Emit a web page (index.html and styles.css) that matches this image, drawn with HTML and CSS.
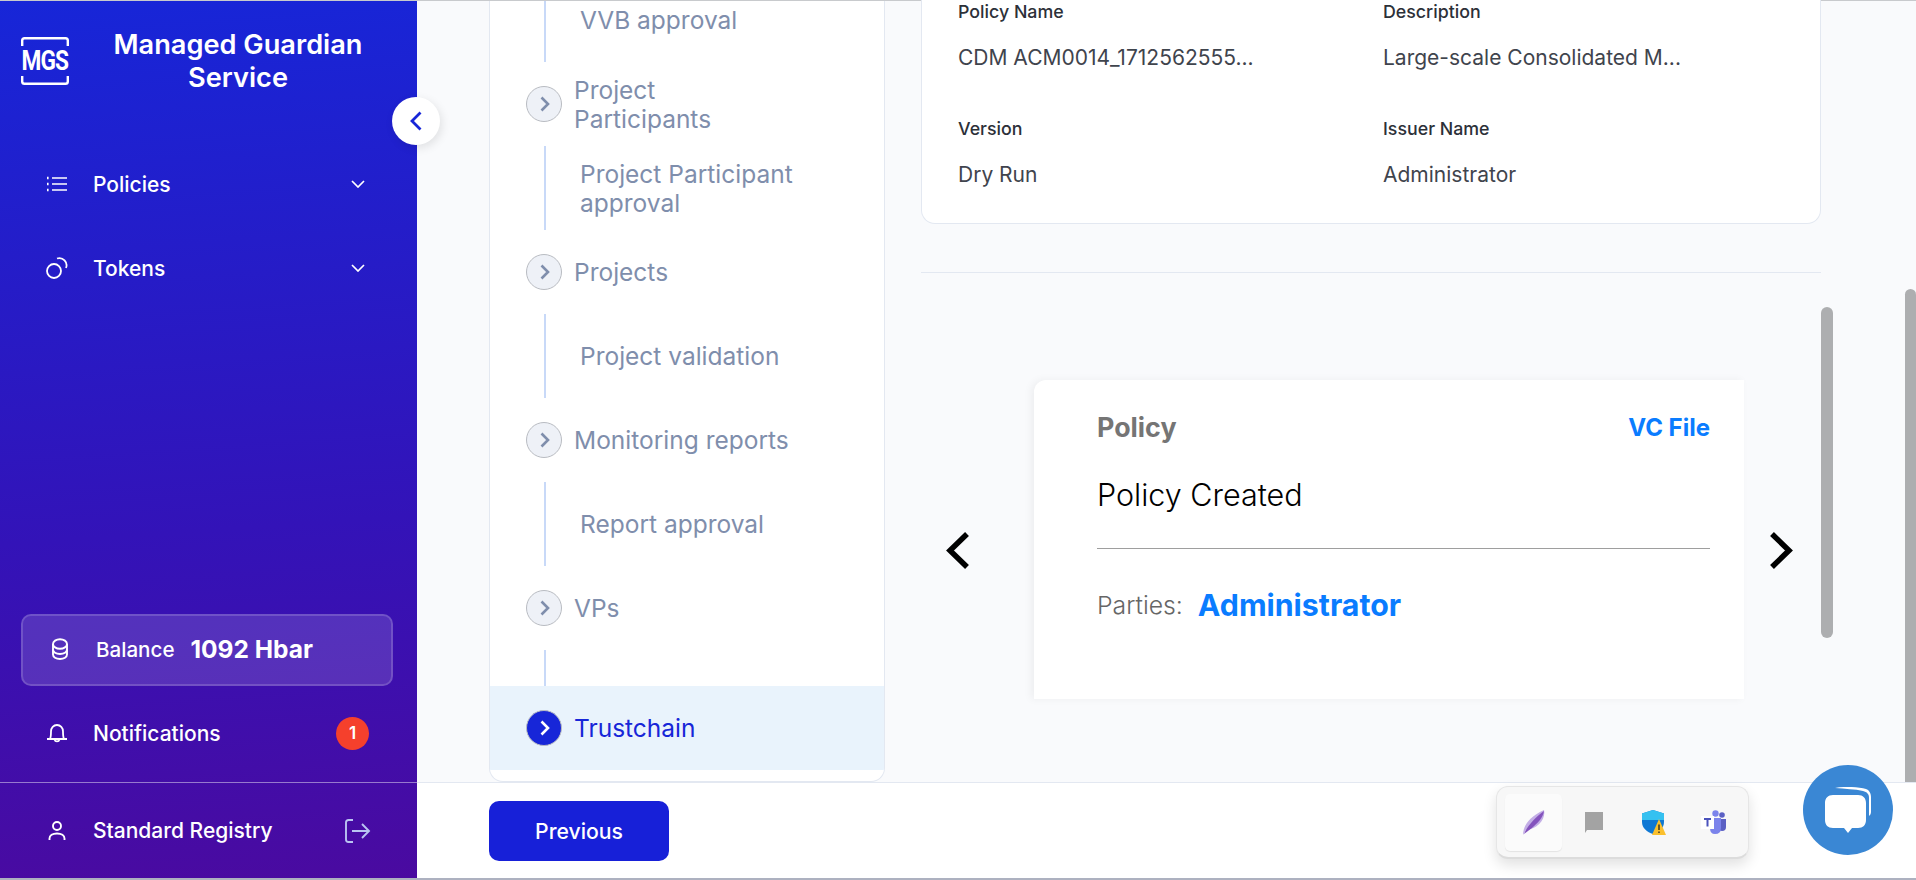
FILE: index.html
```html
<!DOCTYPE html>
<html>
<head lang="en">
    <meta charset="UTF-8">
    <title>Managed Guardian Service</title>
    <link rel="stylesheet" href="styles.css">
</head>
<body>
<div class="app">
    <aside class="sidebar">
        <div class="brand">
            <div class="logo">
                <svg class="logo-frame" width="48" height="48" viewBox="0 0 48 48" fill="none" stroke="#fff" stroke-width="2.4">
                    <path d="M1.2 9V3.5Q1.2 1.2 3.5 1.2H44.500Q46.8 1.2 46.8 3.5V9"/>
                    <path d="M1.2 39V44.500Q1.2 46.8 3.5 46.8H44.500Q46.8 46.8 46.8 44.500V39"/>
                </svg>
                <span class="logo-text">MGS</span>
            </div>
            <div class="brand-name">Managed Guardian Service</div>
        </div>
        <nav class="nav">
            <div class="nav-item">
                <svg class="nav-icon" width="22" height="22" viewBox="0 0 22 22" fill="none" stroke="#fff" stroke-width="1.7">
                    <path d="M6 5H21M6 11H21M6 17H21"/>
                    <path d="M1 5H2.6M1 11H2.6M1 17H2.6" stroke-width="2.4"/>
                </svg>
                <span class="nav-label">Policies</span>
                <svg class="nav-caret" width="14" height="8" viewBox="0 0 14 8" fill="none" stroke="#fff" stroke-width="1.7"><path d="M1 1L7 7L13 1"/></svg>
            </div>
            <div class="nav-item">
                <svg class="nav-icon" width="22" height="22" viewBox="0 0 22 22" fill="none" stroke="#fff" stroke-width="1.8">
                    <circle cx="8" cy="14" r="7"/>
                    <path d="M11 1.500A7.200 7.200 0 0 1 20 11"/>
                </svg>
                <span class="nav-label">Tokens</span>
                <svg class="nav-caret" width="14" height="8" viewBox="0 0 14 8" fill="none" stroke="#fff" stroke-width="1.7"><path d="M1 1L7 7L13 1"/></svg>
            </div>
        </nav>
        <div class="balance">
            <svg class="balance-icon" width="18" height="22" viewBox="0 0 18 22" fill="none" stroke="#fff" stroke-width="1.9">
                <ellipse cx="9" cy="6" rx="7" ry="4.800"/>
                <path d="M2 6V16.500C2 19 5 21 9 21S16 19 16 16.500V6"/>
                <path d="M2 11.500C2 14 5 16 9 16S16 14 16 11.500"/>
            </svg>
            <span class="balance-label">Balance</span>
            <span class="balance-value">1092 Hbar</span>
        </div>
        <div class="nav-item notify">
            <svg class="nav-icon" width="22" height="22" viewBox="0 0 22 22" fill="none" stroke="#fff" stroke-width="1.8">
                <path d="M1 17H21M4 17C5 15 5 12 5 9.500C5 6 7.500 3 11 3S17 6 17 9.500C17 12 17 15 18 17"/>
                <path d="M8.500 17.500A2.600 2.600 0 0 0 13.500 17.500"/>
            </svg>
            <span class="nav-label">Notifications</span>
            <span class="badge">1</span>
        </div>
        <div class="nav-item user">
            <svg class="nav-icon" width="22" height="22" viewBox="0 0 22 22" fill="none" stroke="#fff" stroke-width="1.9">
                <circle cx="11" cy="6" r="4"/>
                <path d="M3.500 20V18.500C3.500 15.500 6.500 13.500 11 13.500S18.500 15.500 18.500 18.500V20"/>
            </svg>
            <span class="nav-label">Standard Registry</span>
            <svg class="logout" width="26" height="24" viewBox="0 0 26 24" fill="none" stroke="#b9c4f2" stroke-width="1.9">
                <path d="M8 1H3.500Q1 1 1 3.500V20.500Q1 23 3.500 23H8"/>
                <path d="M7 12H24M17 5L24 12L17 19"/>
            </svg>
        </div>
    </aside>

    <main class="main">
        <div class="content">
            <div class="steps">
                <div class="steps-list">
                    <div class="sub-step">VVB approval</div>
                    <div class="step">
                        <span class="step-dot"><svg width="10" height="16" viewBox="0 0 10 16" fill="none" stroke="currentColor" stroke-width="2.600"><path d="M1.500 1.500L8 8L1.500 14.500"/></svg></span>
                        <span class="step-name">Project<br>Participants</span>
                    </div>
                    <div class="sub-step">Project Participant<br>approval</div>
                    <div class="step">
                        <span class="step-dot"><svg width="10" height="16" viewBox="0 0 10 16" fill="none" stroke="currentColor" stroke-width="2.600"><path d="M1.500 1.500L8 8L1.500 14.500"/></svg></span>
                        <span class="step-name">Projects</span>
                    </div>
                    <div class="sub-step">Project validation</div>
                    <div class="step">
                        <span class="step-dot"><svg width="10" height="16" viewBox="0 0 10 16" fill="none" stroke="currentColor" stroke-width="2.600"><path d="M1.500 1.500L8 8L1.500 14.500"/></svg></span>
                        <span class="step-name">Monitoring reports</span>
                    </div>
                    <div class="sub-step">Report approval</div>
                    <div class="step">
                        <span class="step-dot"><svg width="10" height="16" viewBox="0 0 10 16" fill="none" stroke="currentColor" stroke-width="2.600"><path d="M1.500 1.500L8 8L1.500 14.500"/></svg></span>
                        <span class="step-name">VPs</span>
                    </div>
                    <div class="sub-step short"></div>
                    <div class="step active">
                        <span class="step-dot"><svg width="10" height="16" viewBox="0 0 10 16" fill="none" stroke="currentColor" stroke-width="2.600"><path d="M1.500 1.500L8 8L1.500 14.500"/></svg></span>
                        <span class="step-name">Trustchain</span>
                    </div>
                </div>
            </div>

            <div class="details">
                <div class="info-card">
                    <div class="info-field">
                        <div class="info-label">Policy Name</div>
                        <div class="info-value">CDM ACM0014_1712562555...</div>
                    </div>
                    <div class="info-field">
                        <div class="info-label">Description</div>
                        <div class="info-value">Large-scale Consolidated M...</div>
                    </div>
                    <div class="info-field">
                        <div class="info-label">Version</div>
                        <div class="info-value">Dry Run</div>
                    </div>
                    <div class="info-field">
                        <div class="info-label">Issuer Name</div>
                        <div class="info-value">Administrator</div>
                    </div>
                </div>
                <div class="rule"></div>
                <div class="carousel">
                    <svg class="arrow" width="23" height="37" viewBox="0 0 23 37" fill="none" stroke="#000" stroke-width="5.500"><path d="M21 2L4 18.500L21 35"/></svg>
                    <div class="vc-card">
                        <div class="vc-top">
                            <span class="vc-type">Policy</span>
                            <span class="vc-link">VC File</span>
                        </div>
                        <div class="vc-title">Policy Created</div>
                        <div class="vc-line"></div>
                        <div class="vc-parties">
                            <span class="vc-parties-label">Parties:</span>
                            <span class="vc-parties-name">Administrator</span>
                        </div>
                    </div>
                    <svg class="arrow" width="23" height="37" viewBox="0 0 23 37" fill="none" stroke="#000" stroke-width="5.500"><path d="M2 2L19 18.500L2 35"/></svg>
                </div>
            </div>
            <div class="inner-track"><div class="inner-thumb"></div></div>
            <div class="page-track"><div class="page-thumb"></div></div>
        </div>
        <div class="footer">
            <button class="btn-prev">Previous</button>
        </div>
    </main>

    <!-- things that float over the page -->
    <button class="collapse">
        <svg width="12" height="20" viewBox="0 0 12 20" fill="none" stroke="#1726d8" stroke-width="2.800"><path d="M10.500 1.500L2 10L10.500 18.500"/></svg>
    </button>

    <div class="tray">
        <div class="tray-item current">
            <svg width="22" height="25" viewBox="0 0 22 25">
                <path d="M0 25C0 16 6 7 21 0C23 9 15 19 3 20Z" fill="#c3aee6"/>
                <path d="M1 24C4 17 10 9 21 1C20 9 12 16 1 24Z" fill="#8453bd"/>
            </svg>
        </div>
        <div class="tray-item">
            <svg width="18" height="21" viewBox="0 0 18 21"><path d="M0 0H18V18H2L0 21Z" fill="#a3a3a3"/></svg>
        </div>
        <div class="tray-item">
            <svg width="24" height="25" viewBox="0 0 24 25">
                <path d="M11 0L22 3.500V12C22 18 17 22 11 24C5 22 0 18 0 12V3.500Z" fill="#0f78d4"/>
                <path d="M11 0L22 3.500V10H0V3.500Z" fill="#35c1f0"/>
                <path d="M17 9L24 25H10Z" fill="#fbc02d"/>
                <path d="M17 14.500V20M17 21.500V23" stroke="#222" stroke-width="1.300"/>
            </svg>
        </div>
        <div class="tray-item">
            <svg width="25" height="24" viewBox="0 0 25 24">
                <circle cx="21" cy="5" r="2.800" fill="#5b60c4"/>
                <circle cx="14.500" cy="3.500" r="3.200" fill="#7b83eb"/>
                <path d="M18 9H25V17Q25 21 21 21Q18 21 17 19Z" fill="#5b60c4"/>
                <path d="M9 8H20V18Q20 24 14 24Q9 24 9 18Z" fill="#7b83eb"/>
                <rect x="0" y="6" width="13" height="13" fill="#fff"/>
                <path d="M3 9H10M6.500 9V16.500" stroke="#4b53bc" stroke-width="2"/>
            </svg>
        </div>
    </div>

    <div class="chat">
        <svg width="46" height="46" viewBox="0 0 46 46">
            <path d="M10 1C20 -1 34 0 41 2C44 3 46 6 46 10V25C46 27 45 28 44 29V11C44 7 42 5 38 4C30 2 20 2 10 1Z" fill="#fff"/>
            <path d="M8 8H33C38 8 41 11 41 16V33C41 38 38 41 33 41H27L23 46L19 41H8C3 41 0 38 0 33V16C0 11 3 8 8 8Z" fill="#fff"/>
        </svg>
    </div>
</div>
</body>
</html>
```

FILE: styles.css
```css
*{
    margin: 0;
    padding: 0;
    box-sizing: border-box;
}
body{
    font-family: "Inter", "Liberation Sans", sans-serif;
    overflow: hidden;
}
.app{
    position: relative;
    display: flex;
    height: 880px;
    border-top: 1px solid #c8cacd;
    border-bottom: 2px solid #adb1c0;
}

/* sidebar */
.sidebar{
    width: 417px;
    flex: none;
    display: flex;
    flex-direction: column;
    background: linear-gradient(176deg, #1726d8 0%, #3313b8 60%, #4a0aa0 100%);
    color: #fff;
}
.brand{
    display: flex;
    align-items: center;
    height: 108px;
    padding: 12px 10px 0 21px;
}
.logo{
    flex: none;
    display: grid;
    grid-template-columns: 48px;
    grid-template-rows: 48px;
    width: 48px;
    height: 48px;
    place-items: center;
}
.logo-frame,
.logo-text{
    grid-area: 1 / 1;
}
.logo-text{
    font-family: "Roboto", sans-serif;
    font-size: 27px;
    font-weight: 700;
    line-height: 28px;
    letter-spacing: -1px;
    transform: scaleX(0.84);
}
.brand-name{
    flex: 1;
    font-size: 27.2px;
    font-weight: 600;
    line-height: 33px;
    text-align: center;
}
.nav{
    margin-top: 54px;
    display: flex;
    flex-direction: column;
    gap: 42px;
}
.nav-item{
    display: flex;
    align-items: center;
    height: 42px;
    padding-left: 46px;
}
.nav-icon{
    flex: none;
    margin-right: 25px;
}
.nav-label{
    flex: 1;
    font-size: 21px;
    font-weight: 500;
}
.nav-caret{
    margin-right: 52px;
}
.balance{
    display: flex;
    align-items: center;
    margin: auto 24px 0 21px;
    height: 72px;
    padding: 0 0 2px 28px;
    background: rgba(255,255,255,0.14);
    border: 2px solid rgba(255,255,255,0.16);
    border-radius: 10px;
}
.balance-icon{
    margin-right: 27px;
}
.balance-label{
    font-size: 20.6px;
    font-weight: 500;
    margin-right: 16px;
}
.balance-value{
    font-size: 24.5px;
    font-weight: 700;
}
.notify{
    margin-top: 26px;
    height: 42px;
    margin-bottom: 28px;
}
.badge{
    width: 33px;
    height: 33px;
    margin-right: 48px;
    border-radius: 50%;
    background: #f5402c;
    text-align: center;
    font-size: 17px;
    font-weight: 600;
    line-height: 33px;
}
.user{
    height: 96px;
    border-top: 1px solid rgba(255,255,255,0.45);
}
.logout{
    margin-right: 46px;
}

/* main area */
.main{
    flex: 1;
    min-width: 0;
    display: flex;
    flex-direction: column;
}
.content{
    flex: 1;
    min-height: 0;
    display: flex;
    padding-left: 72px;
    background: #f9fafc;
}
.steps{
    width: 396px;
    flex: none;
    background: #fff;
    border: 1px solid #e3e8f1;
    border-top: none;
    border-radius: 0 0 14px 14px;
    overflow: hidden;
}
.steps-list{
    margin-top: -23px;
    font-size: 24.5px;
    line-height: 29px;
    color: #7f8eac;
}
.sub-step{
    display: flex;
    align-items: center;
    height: 84px;
    margin-left: 54px;
    padding: 1px 0 0 34px;
    border-left: 2px solid #c8d9f8;
}
.sub-step.short{
    height: 36px;
}
.step{
    display: flex;
    align-items: center;
    height: 84px;
    padding-left: 36px;
}
.step-name{
    padding-top: 1px;
}
.step-dot{
    width: 36px;
    height: 36px;
    flex: none;
    display: flex;
    align-items: center;
    justify-content: center;
    margin-right: 12px;
    padding-left: 2px;
    border: 1px solid #b9bcc2;
    border-radius: 50%;
    background: #eef1f7;
}
.step.active{
    background: #e9f3fc;
    color: #1726d8;
}
.step.active .step-dot{
    background: #1726d8;
    color: #fff;
}
.details{
    width: 900px;
    flex: none;
    margin-left: 36px;
}
.info-card{
    display: grid;
    grid-template-columns: 425px 1fr;
    row-gap: 47px;
    margin-top: -1px;
    padding: 0 36px 36px;
    background: #fff;
    border: 1px solid #e3e8f1;
    border-top: none;
    border-radius: 0 0 14px 14px;
}
.info-label{
    font-size: 17.8px;
    font-weight: 500;
    line-height: 24px;
    color: #2c3038;
}
.info-value{
    margin-top: 22px;
    font-size: 21px;
    line-height: 24px;
    color: #3f444d;
}
.rule{
    height: 1px;
    margin-top: 48px;
    background: #e3e8f1;
}
.carousel{
    display: flex;
    align-items: center;
    height: 319px;
    margin-top: 107px;
    padding-left: 25px;
}
.arrow{
    flex: none;
    margin-top: 21px;
}
.vc-card{
    width: 710px;
    height: 319px;
    margin: 0 26px 0 65px;
    padding: 28px 34px 0 63px;
    background: #fff;
    border-radius: 12px 0 0 0;
    box-shadow: -3px 0 8px rgba(0,0,0,0.05);
}
.vc-top{
    display: flex;
    justify-content: space-between;
    align-items: center;
    height: 38px;
}
.vc-type{
    font-size: 26.8px;
    font-weight: 700;
    color: #757575;
}
.vc-link{
    font-size: 24px;
    font-weight: 700;
    color: #0a7cff;
}
.vc-title{
    margin-top: 30px;
    font-size: 30.5px;
    font-weight: 300;
    line-height: 38px;
    color: #000;
}
.vc-line{
    height: 1px;
    margin-top: 34px;
    background: #9e9e9e;
}
.vc-parties{
    display: flex;
    align-items: center;
    gap: 15px;
    margin-top: 38px;
}
.vc-parties-label{
    font-size: 24.8px;
    font-weight: 300;
    color: #666;
}
.vc-parties-name{
    font-size: 30.3px;
    font-weight: 700;
    color: #0a7cff;
}
.inner-track{
    width: 12px;
    flex: none;
    padding-top: 306px;
}
.inner-thumb{
    height: 331px;
    border-radius: 6px;
    background: #adaeb0;
}
.page-track{
    margin-left: auto;
    width: 11px;
    flex: none;
    padding-top: 288px;
}
.page-thumb{
    height: 100%;
    border-radius: 6px 6px 0 0;
    background: #adaeb0;
}
.footer{
    height: 96px;
    flex: none;
    padding: 18px 0 0 72px;
    background: #fff;
    border-top: 1px solid #e3e8f1;
}
.btn-prev{
    width: 180px;
    height: 60px;
    border: none;
    border-radius: 10px;
    background: #1720d8;
    color: #fff;
    font-family: inherit;
    font-size: 21.2px;
    font-weight: 500;
}

/* floating */
.collapse{
    position: absolute;
    left: 392px;
    top: 96px;
    width: 48px;
    height: 48px;
    display: flex;
    align-items: center;
    justify-content: center;
    border: none;
    border-radius: 50%;
    background: #fff;
    box-shadow: 2px 3px 10px rgba(0,0,0,0.1);
}
.tray{
    position: absolute;
    left: 1496px;
    top: 785px;
    width: 253px;
    height: 73px;
    display: flex;
    align-items: center;
    padding-left: 8px;
    background: #f7f7f7;
    border: 1px solid #e6e6e6;
    border-bottom: 2px solid #dcdcdc;
    border-radius: 12px;
    box-shadow: 0 6px 14px rgba(0,0,0,0.12);
}
.tray-item{
    width: 57px;
    height: 57px;
    flex: none;
    margin-right: 3px;
    display: flex;
    align-items: center;
    justify-content: center;
    border-radius: 5px;
}
.tray-item.current{
    background: #fbfbfb;
    box-shadow: 0 1px 1px rgba(0,0,0,0.08);
}
.chat{
    position: absolute;
    left: 1803px;
    top: 764px;
    width: 90px;
    height: 90px;
    display: flex;
    align-items: center;
    justify-content: center;
    border-radius: 50%;
    background: #3a87d4;
}
```
